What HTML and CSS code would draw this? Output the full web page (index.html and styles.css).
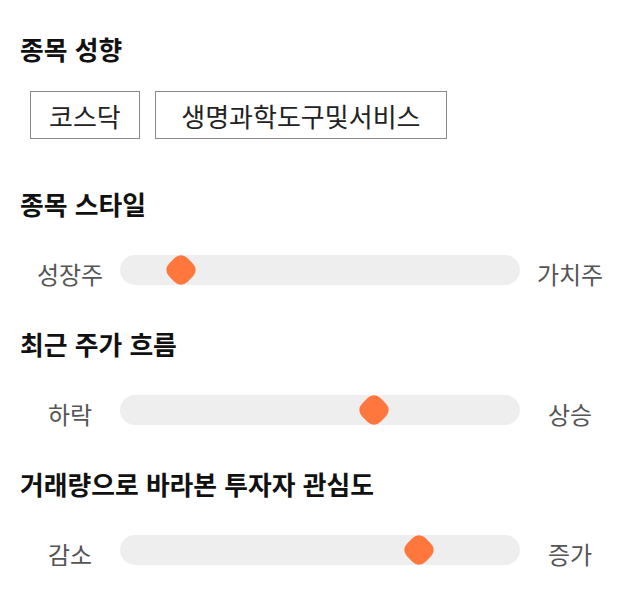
FILE: index.html
```html
<html lang="ko"><head>
    <meta charset="UTF-8">
    <meta name="viewport" content="width=device-width, initial-scale=1.0">
    <title>종목 분석</title>
    <link rel="stylesheet" href="styles.css">
</head>

<body>
    <!-- 종목 성향 -->
    <section class="block">
        <h2 class="block-title">종목 성향</h2>
        <div class="chips">
            <span class="chip">코스닥</span>
            <span class="chip chip-wide">생명과학도구및서비스</span>
        </div>
    </section>

    <!-- 종목 스타일 -->
    <section class="block">
        <h2 class="block-title">종목 스타일</h2>
        <div class="scale">
            <span class="scale-label">성장주</span>
            <div class="track"><div class="thumb" style="left: 15.25%"></div></div>
            <span class="scale-label">가치주</span>
        </div>
    </section>

    <!-- 최근 주가 흐름 -->
    <section class="block">
        <h2 class="block-title">최근 주가 흐름</h2>
        <div class="scale">
            <span class="scale-label">하락</span>
            <div class="track"><div class="thumb" style="left: 63.5%"></div></div>
            <span class="scale-label">상승</span>
        </div>
    </section>

    <!-- 거래량 -->
    <section class="block">
        <h2 class="block-title">거래량으로 바라본 투자자 관심도</h2>
        <div class="scale">
            <span class="scale-label">감소</span>
            <div class="track"><div class="thumb" style="left: 74.75%"></div></div>
            <span class="scale-label">증가</span>
        </div>
    </section>
</body></html>
```

FILE: styles.css
```css
body {
    font-family: 'Noto Sans CJK KR', 'Noto Sans', sans-serif;
    margin: 0px;
    padding: 32px 20px 0px 20px;
    background-color: white;
    color: #222;
}

.block {
    margin-bottom: 33px;
}

.block-title {
    font-size: 25.8px;
    font-weight: bold;
    line-height: 34px;
    color: #111;
    margin: 0px 0px 25px 0px;
}

.chips {
    display: flex;
    flex-wrap: wrap;
    gap: 15px;
    padding: 0px 0px 15px 10px;
}

.chip {
    display: flex;
    align-items: center;
    height: 46px;
    padding: 0px 18px;
    border: 1px solid #8a8a8a;
    font-size: 26px;
    color: #222;
}

.chip-wide {
    padding: 0px 25.5px;
}

.scale {
    display: grid;
    grid-template-columns: 100px 400px 100px;
    align-items: center;
    height: 48px;
}

.scale-label {
    font-size: 24px;
    color: #555;
    text-align: center;
    padding-top: 6px;
}

.track {
    position: relative;
    height: 30px;
    border-radius: 15px;
    background-color: #eeeeee;
}

.thumb {
    position: absolute;
    top: 50%;
    width: 26px;
    height: 26px;
    border-radius: 9px;
    background-color: #ff773d;
    transform: translate(-50%, -50%) rotate(45deg);
}
```
